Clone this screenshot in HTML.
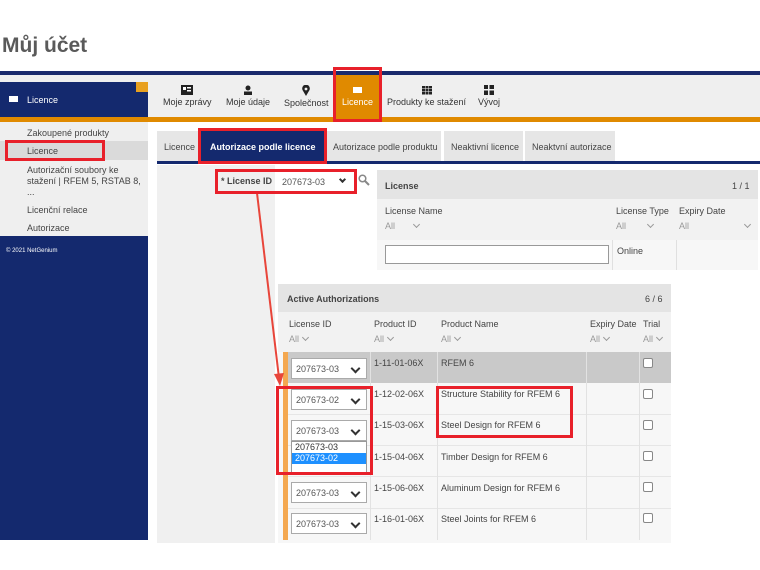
<!DOCTYPE html><html><head><meta charset="utf-8"><style>
*{margin:0;padding:0;box-sizing:border-box}
body{width:760px;height:570px;background:#fff;position:relative;font-family:"Liberation Sans",sans-serif;font-size:9px;color:#444;overflow:hidden}
.a{position:absolute}
.red{position:absolute;border:3px solid #e8202a}
.chev{display:inline-block;width:5px;height:5px;border-right:1.5px solid currentColor;border-bottom:1.5px solid currentColor;transform:rotate(45deg);margin-left:4px;position:relative;top:-2px}
.sel{position:absolute;background:#fff;border:1px solid #aaa;height:21px;width:76px;font-size:9px;padding:5px 0 0 4px;color:#555}
.sel:after{content:"";position:absolute;right:7px;top:6px;width:5px;height:5px;border-right:2px solid #333;border-bottom:2px solid #333;transform:rotate(45deg)}
.cb{position:absolute;width:10px;height:10px;border:1px solid #888;background:#fff;border-radius:2px}
.nav{position:absolute;top:85px;text-align:center;font-size:9px;color:#333}
.nav svg{display:block;margin:0 auto 2px}
</style></head><body>
<div class="a" style="left:2px;top:34px;font-size:21px;font-weight:bold;color:#5a5a5a">Můj účet</div>
<div class="a" style="left:0;top:71px;width:760px;height:4px;background:#1a2a6c"></div>
<div class="a" style="left:0;top:75px;width:760px;height:42px;background:#efefef"></div>
<div class="a" style="left:0;top:117px;width:760px;height:5px;background:#e08a00"></div>
<div class="a" style="left:0;top:82px;width:148px;height:35px;background:#14296e"></div>
<div class="a" style="left:136px;top:82px;width:12px;height:10px;background:#e8a020"></div>
<div class="a" style="left:9px;top:96px;width:9px;height:6px;background:#fff"></div>
<div class="a" style="left:27px;top:95px;color:#fff">Licence</div>
<div class="a" style="left:0;top:122px;width:148px;height:114px;background:#efefef"></div>
<div class="a" style="left:0;top:141px;width:148px;height:19px;background:#dadada"></div>
<div class="a" style="left:27px;top:127px;line-height:12px;color:#444">Zakoupené produkty</div>
<div class="a" style="left:27px;top:146px;color:#444">Licence</div>
<div class="a" style="left:27px;top:165px;width:115px;line-height:11px;color:#444">Autorizační soubory ke stažení | RFEM 5, RSTAB 8, ...</div>
<div class="a" style="left:27px;top:205px;color:#444">Licenční relace</div>
<div class="a" style="left:27px;top:223px;color:#444">Autorizace</div>
<div class="a" style="left:0;top:236px;width:148px;height:304px;background:#14296e"></div>
<div class="a" style="left:6px;top:248px;color:#fff;font-size:6px">© 2021 NetGenium</div>
<div class="nav" style="left:163px"><svg width="12" height="10"><rect x="0" y="0" width="12" height="10" fill="#222"/><rect x="2" y="2" width="3" height="3" fill="#fff"/><rect x="6" y="2" width="4" height="1.5" fill="#fff"/><rect x="6" y="5" width="4" height="1.5" fill="#fff"/></svg>Moje zprávy</div>
<div class="nav" style="left:226px"><svg width="10" height="10"><circle cx="5" cy="3" r="2.5" fill="#222"/><rect x="1" y="6.5" width="8" height="3.5" fill="#222"/></svg>Moje údaje</div>
<div class="nav" style="left:284px"><svg width="10" height="11"><path d="M5 11 L1.5 5 A3.8 3.8 0 1 1 8.5 5 Z" fill="#222"/><circle cx="5" cy="4" r="1.4" fill="#efefef"/></svg>Společnost</div>
<div class="a" style="left:335px;top:75px;width:45px;height:42px;background:#e08a00"></div>
<div class="nav" style="left:342px;color:#fff"><div style="width:9px;height:6px;background:#fff;margin:2px auto 4px"></div>Licence</div>
<div class="nav" style="left:387px"><svg width="10" height="10"><g fill="#222"><rect x="0" y="1" width="3" height="2.5"/><rect x="3.5" y="1" width="3" height="2.5"/><rect x="7" y="1" width="3" height="2.5"/><rect x="0" y="4" width="3" height="2.5"/><rect x="3.5" y="4" width="3" height="2.5"/><rect x="7" y="4" width="3" height="2.5"/><rect x="0" y="7" width="3" height="2.5"/><rect x="3.5" y="7" width="3" height="2.5"/><rect x="7" y="7" width="3" height="2.5"/></g></svg>Produkty ke stažení</div>
<div class="nav" style="left:478px"><svg width="10" height="10"><g fill="#222"><rect x="0" y="0" width="4" height="4"/><rect x="0" y="5.5" width="4" height="4.5"/><rect x="5.5" y="5.5" width="4.5" height="4.5"/><rect x="5.5" y="0" width="4.5" height="4"/></g></svg>Vývoj</div>
<div class="a" style="left:157px;top:131px;width:42px;height:30px;background:#e6e6e6;padding:11px 0 0 7px">Licence</div>
<div class="a" style="left:201px;top:131px;width:124px;height:30px;background:#14296e;color:#fff;font-weight:bold;padding:11px 0 0 9px">Autorizace podle licence</div>
<div class="a" style="left:327px;top:131px;width:114px;height:30px;background:#e6e6e6;padding:11px 0 0 6px">Autorizace podle produktu</div>
<div class="a" style="left:444px;top:131px;width:79px;height:30px;background:#e6e6e6;padding:11px 0 0 7px">Neaktivní licence</div>
<div class="a" style="left:525px;top:131px;width:90px;height:30px;background:#e6e6e6;padding:11px 0 0 7px">Neaktvní autorizace</div>
<div class="a" style="left:157px;top:161px;width:603px;height:3px;background:#14296e"></div>
<div class="a" style="left:157px;top:165px;width:118px;height:378px;background:#f0f0f0"></div>
<div class="a" style="left:221px;top:176px;font-weight:bold">* License ID</div>
<div class="a" style="left:278px;top:172px;width:74px;height:19px;background:#fff;padding:5px 0 0 4px;color:#555">207673-03<span style="position:absolute;right:7px;top:5px;width:5px;height:5px;border-right:2px solid #333;border-bottom:2px solid #333;transform:rotate(45deg)"></span></div>
<svg class="a" style="left:358px;top:174px" width="12" height="12"><circle cx="4.5" cy="4.5" r="3.3" fill="none" stroke="#888" stroke-width="1.5"/><line x1="7" y1="7" x2="11" y2="11" stroke="#888" stroke-width="2"/></svg>
<!-- license panel -->
<div class="a" style="left:377px;top:170px;width:381px;height:100px;background:#f2f2f2"></div>
<div class="a" style="left:377px;top:170px;width:381px;height:29px;background:#e4e4e4"></div>
<div class="a" style="left:385px;top:181px;font-weight:bold">License</div>
<div class="a" style="left:732px;top:181px">1 / 1</div>
<div class="a" style="left:385px;top:206px">License Name</div>
<div class="a" style="left:385px;top:221px;color:#999">All &nbsp; &nbsp; &nbsp;<span class="chev"></span></div>
<div class="a" style="left:616px;top:206px">License Type</div>
<div class="a" style="left:616px;top:221px;color:#999">All &nbsp; &nbsp; &nbsp; <span class="chev"></span></div>
<div class="a" style="left:679px;top:206px">Expiry Date</div>
<div class="a" style="left:679px;top:221px;color:#999">All</div><div class="a" style="left:741px;top:221px;color:#999"><span class="chev"></span></div>
<div class="a" style="left:377px;top:240px;width:381px;height:30px;background:#f7f7f7"></div>
<div class="a" style="left:385px;top:245px;width:224px;height:19px;border:1px solid #999;background:#fff"></div>
<div class="a" style="left:612px;top:240px;width:1px;height:30px;background:#e0e0e0"></div>
<div class="a" style="left:676px;top:240px;width:1px;height:30px;background:#e0e0e0"></div>
<div class="a" style="left:617px;top:246px">Online</div>
<!-- active auth -->
<div class="a" style="left:278px;top:284px;width:393px;height:259px;background:#f7f7f7"></div>
<div class="a" style="left:278px;top:284px;width:393px;height:28px;background:#e4e4e4"></div>
<div class="a" style="left:287px;top:294px;font-weight:bold">Active Authorizations</div>
<div class="a" style="left:645px;top:294px">6 / 6</div>
<div class="a" style="left:278px;top:312px;width:393px;height:40px;background:#f2f2f2"></div>
<div class="a" style="left:289px;top:319px">License ID</div><div class="a" style="left:289px;top:334px;color:#999">All<span class="chev"></span></div>
<div class="a" style="left:374px;top:319px">Product ID</div><div class="a" style="left:374px;top:334px;color:#999">All<span class="chev"></span></div>
<div class="a" style="left:441px;top:319px">Product Name</div><div class="a" style="left:441px;top:334px;color:#999">All<span class="chev"></span></div>
<div class="a" style="left:590px;top:319px">Expiry Date</div><div class="a" style="left:590px;top:334px;color:#999">All<span class="chev"></span></div>
<div class="a" style="left:643px;top:319px">Trial</div><div class="a" style="left:643px;top:334px;color:#999">All<span class="chev"></span></div>
<div class="a" style="left:283px;top:352px;width:5px;height:188px;background:#f4a850"></div>
<div class="a" style="left:288px;top:352px;width:383px;height:31px;background:#c9c9c9"></div>
<div class="a" style="left:288px;top:414px;width:383px;height:1px;background:#e6e6e6"></div>
<div class="a" style="left:288px;top:445px;width:383px;height:1px;background:#e6e6e6"></div>
<div class="a" style="left:288px;top:476px;width:383px;height:1px;background:#e6e6e6"></div>
<div class="a" style="left:288px;top:508px;width:383px;height:1px;background:#e6e6e6"></div>
<div class="a" style="left:370px;top:352px;width:1px;height:188px;background:#e2e2e2"></div>
<div class="a" style="left:437px;top:352px;width:1px;height:188px;background:#e2e2e2"></div>
<div class="a" style="left:586px;top:352px;width:1px;height:188px;background:#e2e2e2"></div>
<div class="a" style="left:639px;top:352px;width:1px;height:188px;background:#e2e2e2"></div>
<div class="sel" style="left:291px;top:358px">207673-03</div>
<div class="sel" style="left:291px;top:389px">207673-02</div>
<div class="sel" style="left:291px;top:420px">207673-03</div>
<div class="sel" style="left:291px;top:482px">207673-03</div>
<div class="sel" style="left:291px;top:513px">207673-03</div>
<div class="a" style="left:291px;top:441px;width:76px;height:34px;background:#fff;border:1px solid #999;font-size:9px;line-height:11px;color:#333"><div style="padding-left:3px">207673-03</div><div style="background:#1e90ff;color:#fff;padding-left:3px">207673-02</div></div>
<div class="a" style="left:374px;top:358px">1-11-01-06X</div><div class="a" style="left:441px;top:358px">RFEM 6</div>
<div class="a" style="left:374px;top:389px">1-12-02-06X</div><div class="a" style="left:441px;top:389px">Structure Stability for RFEM 6</div>
<div class="a" style="left:374px;top:420px">1-15-03-06X</div><div class="a" style="left:441px;top:420px">Steel Design for RFEM 6</div>
<div class="a" style="left:374px;top:452px">1-15-04-06X</div><div class="a" style="left:441px;top:452px">Timber Design for RFEM 6</div>
<div class="a" style="left:374px;top:483px">1-15-06-06X</div><div class="a" style="left:441px;top:483px">Aluminum Design for RFEM 6</div>
<div class="a" style="left:374px;top:514px">1-16-01-06X</div><div class="a" style="left:441px;top:514px">Steel Joints for RFEM 6</div>
<div class="cb" style="left:643px;top:358px"></div><div class="cb" style="left:643px;top:389px"></div><div class="cb" style="left:643px;top:420px"></div><div class="cb" style="left:643px;top:451px"></div><div class="cb" style="left:643px;top:482px"></div><div class="cb" style="left:643px;top:513px"></div>
<!-- annotations -->
<svg class="a" style="left:0;top:0" width="760" height="570"><line x1="257" y1="193" x2="279" y2="378" stroke="#e8453a" stroke-width="2"/><polygon points="274,374 284,373 280,386" fill="#e8453a"/></svg>
<div class="red" style="left:333px;top:67px;width:49px;height:55px"></div>
<div class="red" style="left:5px;top:140px;width:100px;height:21px"></div>
<div class="red" style="left:198px;top:128px;width:129px;height:36px"></div>
<div class="red" style="left:215px;top:169px;width:142px;height:25px"></div>
<div class="red" style="left:276px;top:386px;width:97px;height:89px"></div>
<div class="red" style="left:436px;top:386px;width:137px;height:52px"></div>
</body></html>
